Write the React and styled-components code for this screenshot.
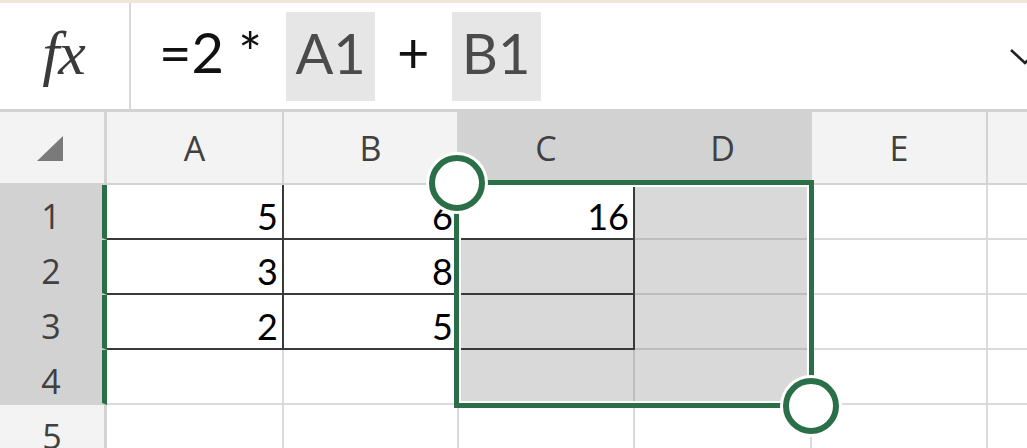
import React from 'react';
import styled, { createGlobalStyle } from 'styled-components';

const GREEN = '#2a6f47';
const LIGHT = '#dadada';
const DARK = '#3a3a3a';
const SELGRID = '#bdbdbd';
const HEAD_BG = '#f3f3f3';
const HEAD_SEL = '#d2d2d2';
const HEAD_LINE = '#d3d3d3';

const GlobalStyle = createGlobalStyle`
  *, *::before, *::after { box-sizing: border-box; }
  html, body { margin: 0; padding: 0; overflow: hidden; background: #fff; }
  body { font-family: "Lato", "Liberation Sans", sans-serif; }
`;

const Page = styled.div`
  width: 1100px;
`;

const FormulaBar = styled.div`
  display: flex;
  height: 112px;
  border-top: 3px solid #f2e6d9;
  border-bottom: 3px solid ${HEAD_LINE};
  background: #fff;
`;

const FxBox = styled.div`
  width: 131px;
  border-right: 2px solid #d9d9d9;
  display: flex;
  align-items: center;
  justify-content: center;
  padding: 0 2px 6px 0;
  font-family: "Liberation Serif", "DejaVu Serif", serif;
  font-style: italic;
  font-size: 62px;
  color: #3a3a3a;
  letter-spacing: -1px;
`;

const Formula = styled.div`
  flex: 1;
  display: flex;
  align-items: center;
  gap: 24px;
  padding-left: 28px;
  font-family: "Lato", "Liberation Sans", sans-serif;
  font-size: 56px;
  color: #111;
`;

const Plain = styled.span`
  line-height: 56px;
  padding-bottom: 9px;
  white-space: pre;
`;

const Op = styled(Plain)`
  margin: 0 -2px;
`;

const Ref = styled.span`
  width: 89px;
  height: 89px;
  background: #e6e6e6;
  color: #4b4b4b;
  display: flex;
  align-items: center;
  justify-content: center;
  line-height: 56px;
  padding-bottom: 6px;
`;

const Chevron = styled.svg`
  margin-left: auto;
  margin-right: 60px;
  flex: none;
`;

const Sheet = styled.div`
  position: relative;
  display: grid;
  grid-template-columns: 107px 177px 175px 176px 177px 176px 112px;
  grid-template-rows: 73px repeat(5, 55px);
`;

const Corner = styled.div`
  background: ${HEAD_BG};
  border-right: 3px solid ${HEAD_LINE};
  border-bottom: 2px solid ${HEAD_LINE};
  display: flex;
  align-items: center;
  justify-content: center;
  padding-right: 3px;
`;

const ColHead = styled.div`
  background: ${p => (p.$selected ? HEAD_SEL : HEAD_BG)};
  border-right: 2px solid ${p => (p.$selected && !p.$lastSel ? HEAD_SEL : HEAD_LINE)};
  border-bottom: 2px solid ${HEAD_LINE};
  display: flex;
  align-items: center;
  justify-content: center;
  font-family: "Open Sans", "Noto Sans", sans-serif;
  font-size: 34px;
  line-height: 34px;
  color: #404040;
`;

const RowHead = styled.div`
  background: ${p => (p.$selected ? HEAD_SEL : HEAD_BG)};
  border-right: ${p => (p.$selected ? `5px solid ${GREEN}` : `3px solid ${HEAD_LINE}`)};
  border-bottom: 2px solid ${p => (p.$selected ? HEAD_SEL : '#dcdcdc')};
  display: flex;
  align-items: flex-end;
  justify-content: center;
  padding-bottom: 5px;
  font-family: "Open Sans", "Noto Sans", sans-serif;
  font-size: 34px;
  line-height: 34px;
  color: #404040;
`;

const Cell = styled.div`
  display: flex;
  align-items: flex-end;
  justify-content: flex-end;
  padding: 0 4px 4px 0;
  background: ${p => (p.$sel && !p.$active ? '#d9d9d9' : '#fff')};
  border-right: 2px solid ${p => (p.$table ? DARK : p.$sel ? SELGRID : LIGHT)};
  border-bottom: 2px solid ${p => (p.$table ? DARK : p.$sel ? SELGRID : LIGHT)};
  font-family: "Lato", "Liberation Sans", sans-serif;
  font-size: 36px;
  line-height: 36px;
  color: #000;
`;

const Selection = styled.div`
  position: absolute;
  left: 454px;
  top: 68px;
  width: 360px;
  height: 228px;
  border: 5px solid ${GREEN};
  box-shadow: inset 0 0 0 2px #fff;
  pointer-events: none;
`;

const Handle = styled.div`
  position: absolute;
  width: 56px;
  height: 56px;
  margin: -28px 0 0 -28px;
  border-radius: 50%;
  border: 6px solid ${GREEN};
  background: #fff;
  box-shadow: 0 0 0 3px #fff;
  left: ${p => p.$x}px;
  top: ${p => p.$y}px;
`;

const COLS = ['A', 'B', 'C', 'D', 'E', 'F'];
const ROWS = [1, 2, 3, 4, 5];
const DATA = { A1: '5', B1: '6', C1: '16', A2: '3', B2: '8', A3: '2', B3: '5' };

export default function App() {
  return (
    <Page>
      <GlobalStyle />
      <FormulaBar>
        <FxBox>fx</FxBox>
        <Formula>
          <Plain>=2 *</Plain>
          <Ref>A1</Ref>
          <Op>+</Op>
          <Ref>B1</Ref>
          <Chevron width="30" height="18" viewBox="0 0 30 18">
            <polyline points="1,3 15,16 29,3" fill="none" stroke="#222" strokeWidth="2.6" />
          </Chevron>
        </Formula>
      </FormulaBar>
      <Sheet>
        <Corner>
          <svg width="27" height="26" viewBox="0 0 27 26" style={{ marginTop: 2 }}>
            <polygon points="26,0 26,25 0,25" fill="#7a7a7a" />
          </svg>
        </Corner>
        {COLS.map(c => (
          <ColHead key={c} $selected={c === 'C' || c === 'D'} $lastSel={c === 'D'}>
            {c === 'F' ? '' : c}
          </ColHead>
        ))}
        {ROWS.map(r => (
          <React.Fragment key={r}>
            <RowHead $selected={r <= 4}>{r}</RowHead>
            {COLS.map(c => {
              const table = r <= 3 && (c === 'A' || c === 'B' || c === 'C');
              const sel = r <= 4 && (c === 'C' || c === 'D');
              const active = c === 'C' && r === 1;
              return (
                <Cell key={c} $table={table} $sel={sel} $active={active}>
                  {DATA[`${c}${r}`] || ''}
                </Cell>
              );
            })}
          </React.Fragment>
        ))}
        <Selection />
        <Handle $x={457} $y={71} />
        <Handle $x={811} $y={294} />
      </Sheet>
    </Page>
  );
}
